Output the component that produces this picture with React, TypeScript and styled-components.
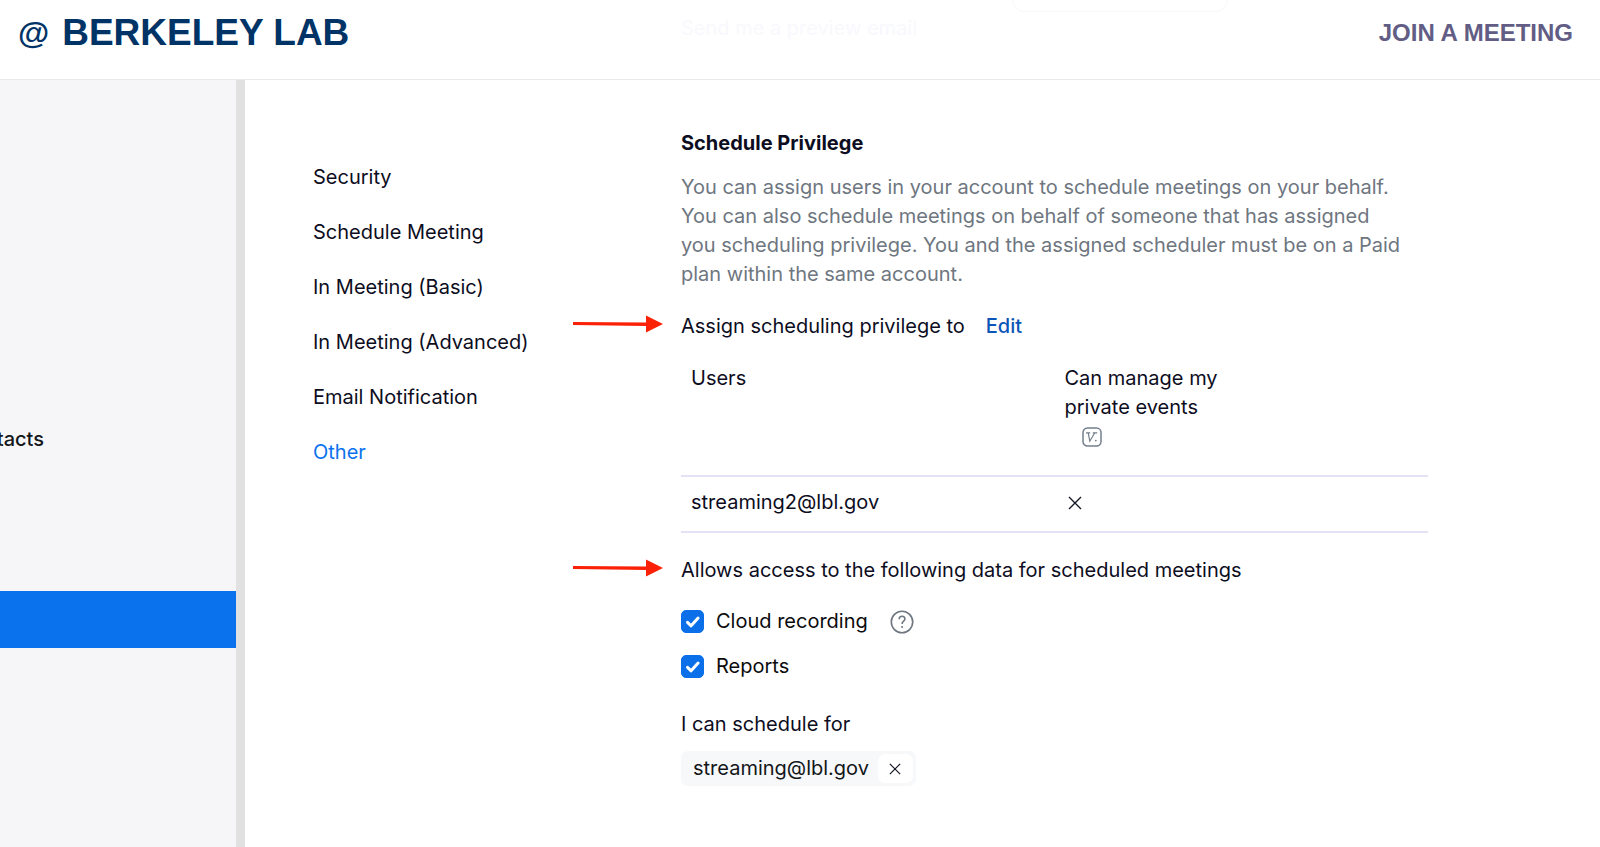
import React, { useState } from "react";
import styled, { createGlobalStyle } from "styled-components";

const Global = createGlobalStyle`
  *, *::before, *::after { box-sizing: border-box; }
  body {
    margin: 0;
    background: #fff;
    color: #0d0d22;
    font-family: Inter, "Liberation Sans", sans-serif;
    font-size: 20px;
    line-height: 29px;
  }
  h1, h2, p, ul { margin: 0; padding: 0; }
  ul { list-style: none; }
  a { color: inherit; text-decoration: none; }
  button { font: inherit; color: inherit; border: 0; background: none; padding: 0; cursor: pointer; }
`;

const Page = styled.div`
  min-height: 100vh;
  display: flex;
  flex-direction: column;
`;

const Header = styled.header`
  position: relative;
  display: flex;
  justify-content: space-between;
  align-items: center;
  height: 80px;
  padding: 0 27px 14px 18px;
  border-bottom: 1px solid #e9e9eb;
  font-family: "Liberation Sans", Arial, sans-serif;
  font-weight: 700;
  overflow: hidden;
`;

const Brand = styled.a`
  display: flex;
  align-items: center;
  gap: 13px;
  color: #003366;
  font-size: 37px;
  line-height: 40px;
`;

const At = styled.span`
  font-size: 32px;
`;

const JoinLink = styled.a`
  color: #625d84;
  font-size: 24px;
`;

/* Settings row scrolled away underneath the translucent header. */
const ScrolledRow = styled.div`
  position: absolute;
  top: -34px;
  left: 681px;
  display: flex;
  align-items: flex-start;
  font-family: Inter, sans-serif;
  font-weight: 400;
  color: #f8f8fd;
`;

const ScrolledLabel = styled.span`
  width: 331px;
  padding-top: 48px;
`;

const ScrolledBox = styled.span`
  width: 216px;
  height: 46px;
  border: 1px solid #f8f8fa;
  border-radius: 12px;
`;

const Body = styled.div`
  flex: 1;
  display: flex;
`;

const Sidebar = styled.nav`
  flex: none;
  width: 245px;
  padding-top: 331px;
  background: #f6f6f9;
  border-right: 9px solid #e1e1e1;
  overflow: hidden;
`;

const SideItem = styled.a<{ $active?: boolean }>`
  display: flex;
  align-items: center;
  justify-content: flex-end;
  height: 57px;
  padding-right: 192px;
  white-space: nowrap;
  font-weight: 500;
  color: #131619;
  background: ${(p) => (p.$active ? "#0b72ee" : "transparent")};
  margin-top: ${(p) => (p.$active ? "123px" : "0")};
`;

const Tabs = styled.nav`
  flex: none;
  width: 436px;
  padding: 83px 0 0 68px;
`;

const TabList = styled.ul`
  display: flex;
  flex-direction: column;
  gap: 26px;
`;

const Tab = styled.a<{ $active?: boolean }>`
  display: block;
  line-height: 29px;
  color: ${(p) => (p.$active ? "#0b72ee" : "inherit")};
`;

const Main = styled.main`
  flex: 1;
  min-width: 0;
  max-width: 747px;
  padding: 49px 0 60px;
`;

const Title = styled.h2`
  font-size: 20px;
  font-weight: 700;
  line-height: 29px;
`;

const Description = styled.p`
  margin-top: 15px;
  max-width: 725px;
  color: #6e7680;
`;

const Line = styled.div<{ $gap: number }>`
  position: relative;
  display: flex;
  align-items: center;
  gap: 21px;
  margin-top: ${(p) => p.$gap}px;
`;

const Arrow = styled.svg`
  position: absolute;
  right: calc(100% + 18px);
  top: 3px;
`;

const EditLink = styled.a`
  color: #0b55b8;
  font-weight: 500;
`;

const Table = styled.table`
  width: 100%;
  margin-top: 23px;
  border-collapse: collapse;
  table-layout: fixed;
`;

const HeadCell = styled.th`
  width: 50%;
  padding: 0 10px 24px;
  border-bottom: 2px solid #e3e3f5;
  font-weight: 400;
  text-align: left;
  vertical-align: top;
`;

const HeadText = styled.span`
  display: block;
  width: 180px;
`;

const Cell = styled.td`
  padding: 11px 10px 14px;
  border-bottom: 2px solid #e3e3f5;
`;

const Badge = styled.svg`
  display: block;
  margin: 5px 0 4px 17px;
`;

const Cross = styled.svg`
  display: block;
`;

const CellMark = styled.span`
  display: block;
  padding-left: 3px;
`;

const Options = styled.div`
  display: flex;
  flex-direction: column;
  gap: 16px;
  margin-top: 22px;
`;

const OptionRow = styled.div`
  display: flex;
  align-items: center;
  gap: 22px;
`;

const OptionLabel = styled.label`
  display: flex;
  align-items: center;
  gap: 12px;
  color: #0b0b0d;
`;

const BoxWrap = styled.span`
  display: grid;
  width: 23px;
  height: 23px;
  > * { grid-area: 1 / 1; }
`;

const Box = styled.input`
  appearance: none;
  width: 23px;
  height: 23px;
  margin: 0;
  border: 1px solid #0b6fea;
  border-radius: 5px;
  background: #fff;
  &:checked { background: #0b6fea; }
`;

const Tick = styled.svg`
  pointer-events: none;
`;

const Help = styled.button`
  display: block;
  height: 24px;
`;

const Chip = styled.div`
  display: inline-flex;
  align-items: center;
  gap: 9px;
  height: 35px;
  margin-top: 12px;
  padding: 0 3px 0 12px;
  border-radius: 7px;
  background: #f7f8fa;
  color: #131619;
`;

const ChipClose = styled.button`
  display: grid;
  place-items: center;
  width: 35px;
  height: 29px;
  border-radius: 7px;
  background: #fff;
`;

const tabs = [
  "Security",
  "Schedule Meeting",
  "In Meeting (Basic)",
  "In Meeting (Advanced)",
  "Email Notification",
  "Other",
];

function RedArrow() {
  return (
    <Arrow width="90" height="18" viewBox="0 0 90 18" aria-hidden="true">
      <path d="M0 7l73 .5v3.5L0 10z" fill="#fb2107" />
      <path d="M73 0.5l17 8.5-17 8.5z" fill="#fb2107" />
    </Arrow>
  );
}

function CrossIcon({ size }: { size: number }) {
  return (
    <Cross width={size} height={size} viewBox="0 0 14 14" aria-hidden="true">
      <path d="M1 1l12 12M13 1L1 13" stroke="#131625" strokeWidth="1.4" fill="none" />
    </Cross>
  );
}

function Option({ label, children }: { label: string; children?: React.ReactNode }) {
  const [on, setOn] = useState(true);
  return (
    <OptionRow>
      <OptionLabel>
        <BoxWrap>
          <Box type="checkbox" checked={on} onChange={(e) => setOn(e.target.checked)} />
          <Tick viewBox="0 0 23 23" width="23" height="23" aria-hidden="true">
            <path d="M6.5 12.3l3.6 3.5 7-7.8" fill="none" stroke="#fff" strokeWidth="3" strokeLinecap="round" strokeLinejoin="round" />
          </Tick>
        </BoxWrap>
        {label}
      </OptionLabel>
      {children}
    </OptionRow>
  );
}

export default function App() {
  return (
    <Page>
      <Global />
      <Header>
        <ScrolledRow aria-hidden="true">
          <ScrolledLabel>Send me a preview email</ScrolledLabel>
          <ScrolledBox />
        </ScrolledRow>
        <Brand href="#">
          <At>@</At>BERKELEY LAB
        </Brand>
        <JoinLink href="#join">JOIN A MEETING</JoinLink>
      </Header>
      <Body>
        <Sidebar aria-label="Account">
          <SideItem href="#contacts">Contacts</SideItem>
          <SideItem href="#settings" $active aria-label="Settings" />
        </Sidebar>
        <Tabs aria-label="Settings sections">
          <TabList>
            {tabs.map((t) => (
              <li key={t}>
                <Tab href="#" $active={t === "Other"}>{t}</Tab>
              </li>
            ))}
          </TabList>
        </Tabs>
        <Main>
          <Title>Schedule Privilege</Title>
          <Description>
            You can assign users in your account to schedule meetings on your behalf. You can also
            schedule meetings on behalf of someone that has assigned you scheduling privilege. You
            and the assigned scheduler must be on a Paid plan within the same account.
          </Description>
          <Line $gap={23}>
            <RedArrow />
            Assign scheduling privilege to
            <EditLink href="#edit">Edit</EditLink>
          </Line>
          <Table>
            <thead>
              <tr>
                <HeadCell scope="col">Users</HeadCell>
                <HeadCell scope="col">
                  <HeadText>Can manage my private events</HeadText>
                  <Badge width="20" height="20" viewBox="0 0 20 20" aria-hidden="true">
                    <rect x="1" y="1" width="18" height="18" rx="4.5" fill="none" stroke="#747f8d" strokeWidth="1.5" />
                    <path d="M4 5.8h4.2M6.2 5.8l1.6 8.4 5-8.4M10.8 5.8h4.4" fill="none" stroke="#747f8d" strokeWidth="1.2" />
                    <circle cx="13.8" cy="13.6" r="0.9" fill="#747f8d" />
                  </Badge>
                </HeadCell>
              </tr>
            </thead>
            <tbody>
              <tr>
                <Cell>streaming2@lbl.gov</Cell>
                <Cell>
                  <CellMark>
                    <CrossIcon size={14} />
                  </CellMark>
                </Cell>
              </tr>
            </tbody>
          </Table>
          <Line $gap={23}>
            <RedArrow />
            Allows access to the following data for scheduled meetings
          </Line>
          <Options>
            <Option label="Cloud recording">
              <Help type="button" aria-label="About cloud recording">
                <svg width="24" height="24" viewBox="0 0 24 24" fill="none" stroke="#6e7680" strokeWidth="1.6">
                  <circle cx="12" cy="12" r="10.7" />
                  <path d="M9.2 9.2c0-1.8 1.2-2.9 2.9-2.9s2.8 1.1 2.8 2.7c0 2.1-2.8 2.3-2.8 4.9" />
                  <circle cx="12.1" cy="16.9" r="1" fill="#6e7680" stroke="none" />
                </svg>
              </Help>
            </Option>
            <Option label="Reports" />
          </Options>
          <Line $gap={29}>I can schedule for</Line>
          <Chip>
            streaming@lbl.gov
            <ChipClose type="button" aria-label="Remove streaming@lbl.gov">
              <CrossIcon size={12} />
            </ChipClose>
          </Chip>
        </Main>
      </Body>
    </Page>
  );
}
